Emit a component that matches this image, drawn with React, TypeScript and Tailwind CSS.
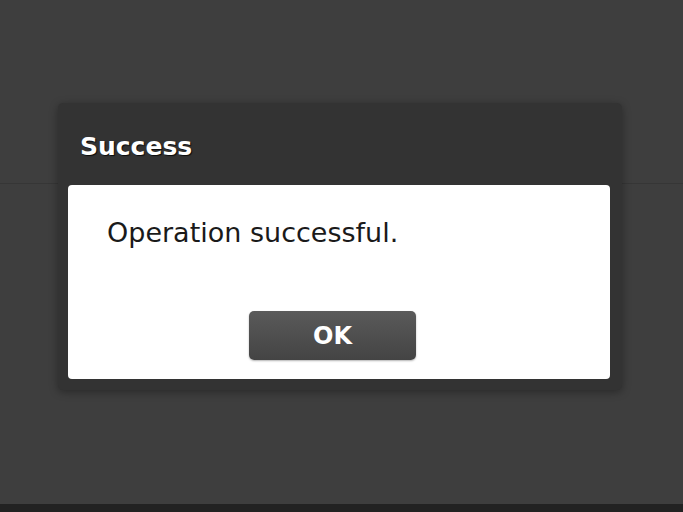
export default function App() {
  return (
    <div className="relative h-[512px] w-[683px] overflow-hidden bg-[#404040] font-['DejaVu_Sans',sans-serif]">
      <div className="flex h-full flex-col">
        <div className="h-[184px] border-b border-[#363636] bg-[#3e3e3e]" />
        <div className="flex-1 bg-[#3e3e3e]" />
        <div className="h-[8px] bg-[#222222]" />
      </div>

      <div className="absolute left-[58px] top-[103px] flex w-[564px] flex-col rounded-[5px] bg-[#333333] pb-[11px] pl-[10px] pr-[12px] shadow-[0_2px_8px_rgba(0,0,0,0.35)]">
        <div className="flex h-[82px] items-center pl-[12px] pt-[6px]">
          <span className="text-[25px] font-bold text-white [text-shadow:1px_1px_1px_rgba(0,0,0,0.8)]">Success</span>
        </div>
        <div className="flex h-[194px] flex-col rounded-[4px] bg-white">
          <p className="pl-[39px] pt-[32px] text-[27px] leading-[32px] text-[#1a1a1a]">Operation successful.</p>
          <div className="mt-auto flex justify-center pb-[19px] pr-[13px]">
            <button className="h-[49px] w-[167px] rounded-[5px] bg-gradient-to-b from-[#5a5a5a] to-[#444444] text-[24px] font-bold text-white shadow-[0_1px_2px_rgba(0,0,0,0.3)]">
              OK
            </button>
          </div>
        </div>
      </div>
    </div>
  );
}
